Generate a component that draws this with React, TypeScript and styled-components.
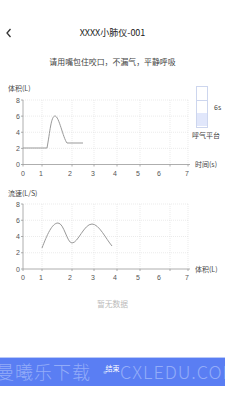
import styled, { createGlobalStyle } from "styled-components";

const GlobalStyle = createGlobalStyle`
  html, body {
    margin: 0;
    padding: 0;
    background: #fff;
  }
  body {
    font-family: "Noto Sans CJK SC", "Noto Sans", sans-serif;
    color: #333;
  }
`;

const Page = styled.div`
  width: 225px;
  height: 400px;
  display: flex;
  flex-direction: column;
  overflow: hidden;
`;

const Header = styled.div`
  margin-top: 23px;
  height: 20px;
  display: flex;
  align-items: center;
  justify-content: center;
  position: relative;
`;

const Back = styled.div`
  position: absolute;
  left: 5px;
  top: 5px;
  width: 8px;
  height: 10px;
  display: flex;
`;

const Title = styled.div`
  font-size: 9px;
  line-height: 20px;
  color: #222;
`;

const Subtitle = styled.div`
  margin-top: 14px;
  font-size: 7.9px;
  line-height: 10px;
  color: #444;
  text-align: center;
`;

const Section = styled.div<{ $top: number; $height: number }>`
  margin-top: ${({ $top }) => $top}px;
  height: ${({ $height }) => $height}px;
  display: flex;
`;

const PlotCol = styled.div`
  width: 190px;
  display: flex;
  flex-direction: column;
`;

const AxisTitle = styled.div`
  padding-left: 8px;
  font-size: 7px;
  line-height: 8px;
  height: 8px;
  color: #444;
`;

const SideCol = styled.div<{ $bottom: number }>`
  flex: 1;
  display: flex;
  flex-direction: column;
  padding-bottom: ${({ $bottom }) => $bottom}px;
`;

const Indicator = styled.div`
  margin-top: 2px;
  padding-left: 6px;
  display: flex;
  align-items: center;
  gap: 6px;
`;

const Bin = styled.div`
  width: 10px;
  height: 40px;
  border: 1px solid #cdd6ee;
  display: flex;
  flex-direction: column;
`;

const BinCell = styled.div<{ $h: number; $fill?: boolean }>`
  height: ${({ $h }) => $h}px;
  background: ${({ $fill }) => ($fill ? "#e1e7fb" : "transparent")};
  border-top: ${({ $fill }) => ($fill ? "none" : "1px solid #cdd6ee")};
  &:first-child {
    border-top: none;
  }
`;

const SmallLabel = styled.div<{ $left?: number; $top?: number }>`
  font-size: 7px;
  line-height: 8px;
  color: #444;
  padding-left: ${({ $left }) => $left ?? 0}px;
  margin-top: ${({ $top }) => $top ?? 0}px;
  white-space: nowrap;
`;

const AxisUnit = styled(SmallLabel)`
  margin-top: auto;
  padding-left: 5px;
`;

const Empty = styled.div`
  margin-top: 17px;
  font-size: 7.8px;
  line-height: 8px;
  color: #bbb;
  text-align: center;
`;

const Footer = styled.div`
  margin-top: auto;
  height: 43px;
  display: flex;
  flex-direction: column;
`;

const Bar = styled.div`
  height: 28px;
  background: #5a7ef3;
  border-top: 1px solid #b9c9f8;
  position: relative;
  display: flex;
  justify-content: center;
  overflow: hidden;
`;

const BarText = styled.div`
  margin-top: 5px;
  font-size: 7px;
  line-height: 10px;
  color: #fff;
  position: relative;
  z-index: 2;
`;

const Watermark = styled.div`
  position: absolute;
  left: -4px;
  top: 1px;
  font-family: "Noto Sans CJK SC", sans-serif;
  font-weight: 300;
  font-size: 18px;
  letter-spacing: 1px;
  line-height: 24px;
  color: #93acf8;
  white-space: nowrap;
  z-index: 1;
`;

const GRID_X = [23, 42, 72, 94, 117, 140, 170, 188];
const LABEL_X = [23, 41, 70, 93, 115, 138, 159, 187];

interface ChartProps {
  top: number;
  bottom: number;
  curve: string;
  height: number;
}

const Chart = ({ top, bottom, curve, height }: ChartProps) => {
  const yOf = (v: number) => bottom - ((bottom - top) * v) / 8;
  return (
    <svg width={190} height={height} viewBox={`0 0 190 ${height}`}>
      {[2, 4, 6, 8].map((v) => (
        <line
          key={`h${v}`}
          x1={23}
          x2={188}
          y1={yOf(v)}
          y2={yOf(v)}
          stroke="#ddd"
          strokeWidth={0.6}
          strokeDasharray="1 1"
        />
      ))}
      {GRID_X.slice(1).map((x) => (
        <line
          key={`v${x}`}
          x1={x}
          x2={x}
          y1={top}
          y2={bottom}
          stroke="#ddd"
          strokeWidth={0.6}
          strokeDasharray="1 1"
        />
      ))}
      <line x1={23} x2={23} y1={top} y2={bottom} stroke="#999" strokeWidth={0.8} />
      <line x1={23} x2={190} y1={bottom} y2={bottom} stroke="#999" strokeWidth={0.8} />
      {[0, 2, 4, 6, 8].map((v) => (
        <g key={`y${v}`}>
          <line x1={21} x2={23} y1={yOf(v)} y2={yOf(v)} stroke="#999" strokeWidth={0.8} />
          <text
            x={18}
            y={yOf(v) + 2.5}
            fontSize={7}
            fill="#555"
            textAnchor="middle"
            fontFamily="'Liberation Sans', sans-serif"
          >
            {v}
          </text>
        </g>
      ))}
      {GRID_X.map((x, i) => (
        <g key={`x${i}`}>
          <line x1={x} x2={x} y1={bottom} y2={bottom + 2} stroke="#999" strokeWidth={0.8} />
          <text
            x={LABEL_X[i]}
            y={bottom + 11}
            fontSize={7}
            fill="#555"
            textAnchor="middle"
            fontFamily="'Liberation Sans', sans-serif"
          >
            {i}
          </text>
        </g>
      ))}
      <path d={curve} fill="none" stroke="#999" strokeWidth={1} />
    </svg>
  );
};

export default function App() {
  return (
    <Page>
      <GlobalStyle />
      <Header>
        <Back>
          <svg width={8} height={10} viewBox="0 0 8 10">
            <path d="M5.5 1 L2 5 L5.5 9" fill="none" stroke="#333" strokeWidth={1.3} />
          </svg>
        </Back>
        <Title>XXXX小肺仪-001</Title>
      </Header>
      <Subtitle>请用嘴包住咬口，不漏气，平静呼吸</Subtitle>

      <Section $top={17} $height={96}>
        <PlotCol>
          <AxisTitle>体积(L)</AxisTitle>
          <Chart
            top={8}
            bottom={72.5}
            height={88}
            curve="M23,56 L47,56 C50,40 51,24 55,24 C59,24 63,46 67,51 L83,51"
          />
        </PlotCol>
        <SideCol $bottom={12}>
          <Indicator>
            <Bin>
              <BinCell $h={13} />
              <BinCell $h={12} />
              <BinCell $h={13} $fill />
            </Bin>
            <SmallLabel>6s</SmallLabel>
          </Indicator>
          <SmallLabel $left={2} $top={3}>
            呼气平台
          </SmallLabel>
          <AxisUnit>时间(s)</AxisUnit>
        </SideCol>
      </Section>

      <Section $top={9} $height={94}>
        <PlotCol>
          <AxisTitle>流速(L/S)</AxisTitle>
          <Chart
            top={7}
            bottom={72}
            height={86}
            curve="M42,51 C47,38 52,26 58,26 C64,26 67,46 72,46 C78,46 84,27 92,27 C99,27 106,42 112,49"
          />
        </PlotCol>
        <SideCol $bottom={10}>
          <AxisUnit>体积(L)</AxisUnit>
        </SideCol>
      </Section>

      <Empty>暂无数据</Empty>

      <Footer>
        <Bar>
          <Watermark>曼曦乐下载 • CXLEDU.COM</Watermark>
          <BarText>结束</BarText>
        </Bar>
      </Footer>
    </Page>
  );
}
